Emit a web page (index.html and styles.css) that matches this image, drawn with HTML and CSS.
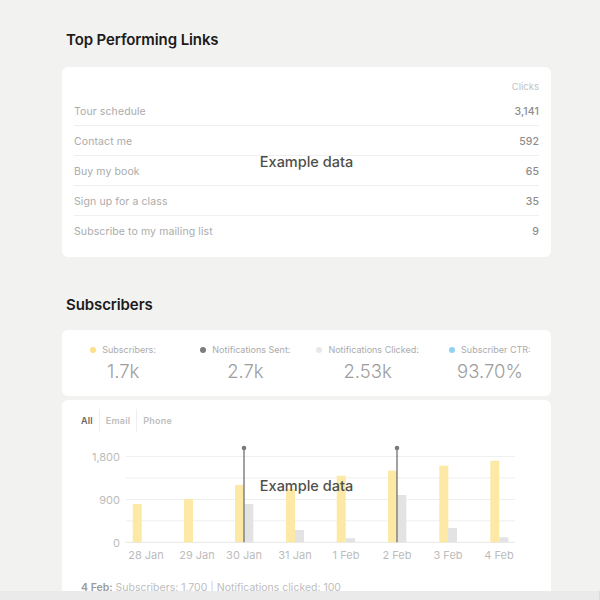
FILE: index.html
```html
<!DOCTYPE html>
<html>
<head>
<meta charset="utf-8">
<link rel="stylesheet" href="styles.css">
</head>
<body>
<main class="page">
  <h2 class="section-title first">Top Performing Links</h2>
  <section class="card links">
    <div class="links-head">Clicks</div>
    <div class="row"><span>Tour schedule</span><span class="num">3,141</span></div>
    <div class="row"><span>Contact me</span><span class="num">592</span></div>
    <div class="row"><span>Buy my book</span><span class="num">65</span></div>
    <div class="row"><span>Sign up for a class</span><span class="num">35</span></div>
    <div class="row last"><span>Subscribe to my mailing list</span><span class="num">9</span></div>
    <div class="example">Example data</div>
  </section>

  <h2 class="section-title second">Subscribers</h2>
  <section class="card stats">
    <div class="stat"><div class="stat-label"><i class="dot yellow"></i>Subscribers:</div><div class="stat-value">1.7k</div></div>
    <div class="stat"><div class="stat-label"><i class="dot dark"></i>Notifications Sent:</div><div class="stat-value">2.7k</div></div>
    <div class="stat"><div class="stat-label"><i class="dot light"></i>Notifications Clicked:</div><div class="stat-value">2.53k</div></div>
    <div class="stat"><div class="stat-label"><i class="dot blue"></i>Subscriber CTR:</div><div class="stat-value">93.70%</div></div>
  </section>

  <section class="card chart-card">
    <div class="tabs">
      <span class="tab active">All</span>
      <span class="tab">Email</span>
      <span class="tab">Phone</span>
    </div>
    <svg class="chart" width="489" height="130" viewBox="62 440 489 130">
      <g stroke="#efefef" stroke-width="1">
        <line x1="126" y1="457.5" x2="515" y2="457.5"/>
        <line x1="126" y1="479" x2="515" y2="479"/>
        <line x1="126" y1="500.5" x2="515" y2="500.5"/>
        <line x1="126" y1="521.8" x2="515" y2="521.8"/>
        <line x1="126" y1="543.3" x2="515" y2="543.3" stroke="#e6e6e6"/>
      </g>
      <g class="ylab" text-anchor="end">
        <text x="120" y="461.5">1,800</text>
        <text x="120" y="504.5">900</text>
        <text x="120" y="547.5">0</text>
      </g>
      <g fill="#fce9a6">
        <rect x="132.7" y="505" width="9" height="38.3"/>
        <rect x="184" y="500" width="9" height="43.3"/>
        <rect x="235" y="486" width="9" height="57.3"/>
        <rect x="286" y="490" width="9" height="53.3"/>
        <rect x="336.7" y="476.7" width="9" height="66.6"/>
        <rect x="388" y="471.7" width="9" height="71.6"/>
        <rect x="439.3" y="466.7" width="9" height="76.6"/>
        <rect x="490.3" y="461.7" width="9" height="81.6"/>
      </g>
      <g fill="#e3e3e3">
        <rect x="244.3" y="505" width="9" height="38.3"/>
        <rect x="295" y="531" width="9" height="12.3"/>
        <rect x="346" y="539.3" width="9" height="4"/>
        <rect x="397.3" y="496" width="9" height="47.3"/>
        <rect x="448" y="529" width="9" height="14.3"/>
        <rect x="499.3" y="538.3" width="9" height="5"/>
      </g>
      <g stroke="#7a7a7a" stroke-width="1.4" fill="#7a7a7a">
        <line x1="244" y1="449" x2="244" y2="543.3"/>
        <circle cx="244" cy="449" r="2.3" stroke="none"/>
        <line x1="397" y1="449" x2="397" y2="543.3"/>
        <circle cx="397" cy="449" r="2.3" stroke="none"/>
      </g>
      <g class="xlab" text-anchor="middle">
        <text x="146" y="560">28 Jan</text>
        <text x="197" y="560">29 Jan</text>
        <text x="244" y="560">30 Jan</text>
        <text x="295" y="560">31 Jan</text>
        <text x="346" y="560">1 Feb</text>
        <text x="397" y="560">2 Feb</text>
        <text x="448" y="560">3 Feb</text>
        <text x="499" y="560">4 Feb</text>
      </g>
    </svg>
    <div class="chart-foot"><b>4 Feb:</b> Subscribers: 1,700 <span class="bar">|</span> Notifications clicked: 100</div>
    <div class="example chart-example">Example data</div>
  </section>
</main>
<div class="hscroll"></div>
</body>
</html>
```
FILE: styles.css
```css
* { box-sizing: border-box; }
html, body { margin: 0; padding: 0; }
body {
  background: #f2f2f1;
  font-family: Inter, "Open Sans", sans-serif;
  width: 600px;
  height: 600px;
  overflow: hidden;
}
.page {
  width: 489px;
  margin-left: 62px;
}
.section-title {
  margin: 0;
  padding-left: 4px;
  font-size: 15px;
  font-weight: 600;
  color: #1b1b1b;
  letter-spacing: -0.1px;
  line-height: 20px;
}
.section-title.first { padding-top: 30px; height: 67px; }
.section-title.second { padding-top: 38px; height: 73px; }

.card {
  background: #fff;
  border-radius: 6px;
  position: relative;
}
.links {
  height: 190px;
  padding: 10px 12px 0;
}
.links-head {
  height: 19px;
  line-height: 20px;
  text-align: right;
  font-size: 9.5px;
  color: #c2c2c2;
}
.row {
  height: 30px;
  display: flex;
  justify-content: space-between;
  align-items: center;
  font-size: 10.5px;
  color: #ababab;
  border-bottom: 1px solid #efefef;
  padding-top: 1px;
  letter-spacing: 0.1px;
}
.row.last { border-bottom: none; }
.row .num { color: #8c8c8c; font-weight: 500; }

.example {
  position: absolute;
  left: 0;
  right: 0;
  top: 86px;
  text-align: center;
  font-size: 14.5px;
  font-weight: 500;
  color: #4f4f4a;
}
.chart-example { top: 77px; }

.stats {
  height: 66px;
  display: grid;
  grid-template-columns: repeat(4, 1fr);
  padding-top: 13px;
}
.stat { text-align: center; }
.stat-label {
  font-size: 9px;
  color: #ababab;
  height: 14px;
  line-height: 14px;
  display: flex;
  align-items: center;
  justify-content: center;
}
.dot {
  display: inline-block;
  width: 6px;
  height: 6px;
  border-radius: 50%;
  margin-right: 6px;
}
.dot.yellow { background: #fbe18c; }
.dot.dark { background: #7d7d7d; }
.dot.light { background: #e8e8e8; }
.dot.blue { background: #8fd2f3; }
.stat-value {
  margin-top: 1px;
  font-size: 18.5px;
  font-weight: 300;
  color: #9d9d9d;
  line-height: 26px;
}

.chart-card {
  margin-top: 4px;
  height: 210px;
  border-radius: 6px 6px 0 0;
  padding-top: 8px;
}
.tabs {
  display: flex;
  padding-left: 19px;
  height: 24px;
  align-items: stretch;
  padding-top: 1px;
}
.tab {
  font-size: 9px;
  font-weight: 600;
  color: #bdbdbd;
  padding: 0 6px;
  display: flex;
  align-items: center;
  border-left: 1px solid #efefef;
  letter-spacing: 0.2px;
}
.tab.active { color: #666; padding-left: 0; border-left: none; }
.chart {
  display: block;
  margin-top: 7px;
}
.chart text {
  font-family: Inter, sans-serif;
  font-size: 11px;
  fill: #bcbcbc;
}
.chart-foot {
  padding-left: 19px;
  margin-top: 12px;
  font-size: 10.5px;
  color: #bdbdbd;
}
.chart-foot b { font-weight: 600; color: #9a9a9a; }
.chart-foot .bar { color: #ccc; }

.hscroll {
  position: fixed;
  left: 0;
  right: 0;
  bottom: 0;
  height: 9px;
  background: #eaeaea;
  border-right: 1px solid #dcdcdc;
}
```
